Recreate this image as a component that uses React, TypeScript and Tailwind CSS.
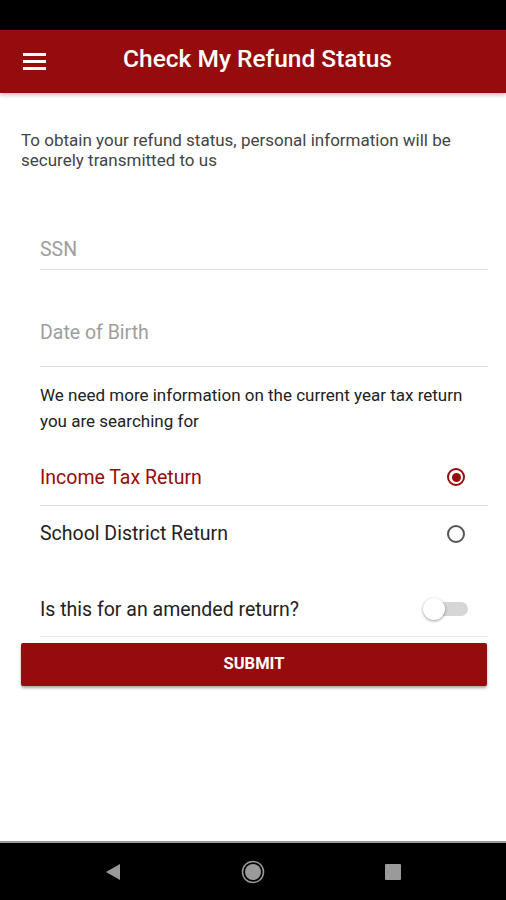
import React from 'react';

const font = { fontFamily: 'Roboto, "Noto Sans", sans-serif' };

const Radio: React.FC<{ checked?: boolean }> = ({ checked }) =>
  checked ? (
    <div className="w-[18px] h-[18px] rounded-full border-2 border-[#960b0b] flex items-center justify-center">
      <div className="w-[9px] h-[9px] rounded-full bg-[#960b0b]" />
    </div>
  ) : (
    <div className="w-[18px] h-[18px] rounded-full border-2 border-[#555]" />
  );

export default function App() {
  return (
    <div className="w-[506px] h-[900px] bg-white flex flex-col overflow-hidden" style={font}>
      <div className="h-[30px] bg-black shrink-0" />

      <header className="h-[63px] bg-[#960b0b] shrink-0 flex items-center relative shadow-[0_2px_4px_rgba(0,0,0,0.25)] z-10">
        <div className="pl-[23px] flex flex-col gap-[4px]">
          <div className="w-[23px] h-[3px] bg-white" />
          <div className="w-[23px] h-[3px] bg-white" />
          <div className="w-[23px] h-[3px] bg-white" />
        </div>
        <h1 className="flex-1 text-center text-white text-[24.5px] font-medium pr-[37px] -mt-[4px]">Check My Refund Status</h1>
      </header>

      <main className="flex-1 flex flex-col">
        <p className="pl-[21px] pr-[18px] pt-[37px] text-[17px] leading-[20px] text-[#444]">
          To obtain your refund status, personal information will be securely transmitted to us
        </p>

        <div className="ml-[40px] mr-[18px] mt-[66px] pt-[2px] border-b border-[#e0e0e0] h-[34px] text-[19.5px] text-[#9e9e9e] leading-[24px]">SSN</div>
        <div className="ml-[40px] mr-[18px] mt-[49px] pt-[2px] border-b border-[#e0e0e0] h-[48px] text-[19.5px] text-[#9e9e9e] leading-[24px]">Date of Birth</div>

        <p className="ml-[40px] mr-[18px] mt-[15px] text-[17px] leading-[26px] text-[#222]">
          We need more information on the current year tax return you are searching for
        </p>

        <div className="ml-[40px] mr-[18px] mt-[15px] h-[57px] flex items-center justify-between border-b border-[#e0e0e0]">
          <span className="text-[19.5px] text-[#960b0b] pt-[1px]">Income Tax Return</span>
          <div className="mr-[23px]"><Radio checked /></div>
        </div>
        <div className="ml-[40px] mr-[18px] h-[55px] flex items-center justify-between">
          <span className="text-[19.5px] text-[#222]">School District Return</span>
          <div className="mr-[23px]"><Radio /></div>
        </div>

        <div className="ml-[40px] mr-[18px] mt-[21px] h-[55px] flex items-center justify-between border-b border-[#e8e8e8]">
          <span className="text-[19.5px] text-[#222] pt-[1px]">Is this for an amended return?</span>
          <div className="relative w-[46px] h-[22px] mr-[20px] flex items-center">
            <div className="absolute left-[3px] right-0 h-[14px] rounded-full bg-[#d6d6d6]" />
            <div className="absolute left-[1px] w-[22px] h-[22px] rounded-full bg-white shadow-[0_1px_3px_rgba(0,0,0,0.4)]" />
          </div>
        </div>

        <button className="ml-[21px] mr-[19px] mt-[6px] h-[43px] bg-[#960b0b] text-white text-[16.5px] font-bold rounded-[2px] shadow-[0_2px_3px_rgba(0,0,0,0.35)]">
          SUBMIT
        </button>
      </main>

      <nav className="h-[59px] bg-black shrink-0 border-t-2 border-[#9a9a9a] flex items-center justify-center gap-[120px]">
        <svg width="16" height="18" viewBox="0 0 16 18"><path d="M15 1 L1 9 L15 17 Z" fill="#9a9a9a" /></svg>
        <svg width="24" height="24" viewBox="0 0 24 24">
          <circle cx="12" cy="12" r="10.5" fill="none" stroke="#9a9a9a" strokeWidth="1.5" />
          <circle cx="12" cy="12" r="8" fill="#9a9a9a" />
        </svg>
        <svg width="16" height="16" viewBox="0 0 16 16"><rect x="0" y="0" width="16" height="16" rx="1" fill="#9a9a9a" /></svg>
      </nav>
    </div>
  );
}
